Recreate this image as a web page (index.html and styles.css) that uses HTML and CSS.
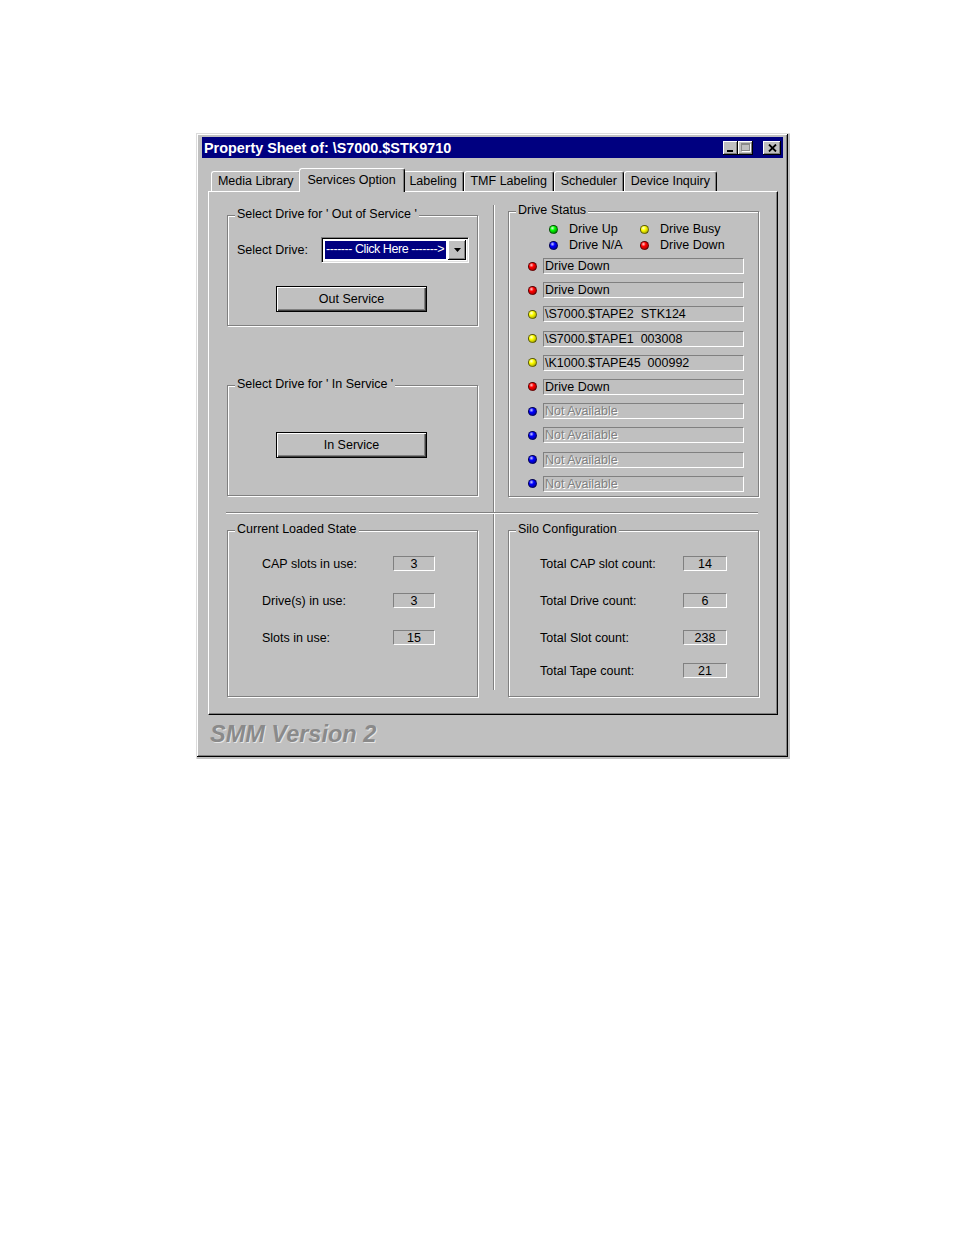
FILE: index.html
```html
<!DOCTYPE html>
<html>
<head>
<meta charset="utf-8">
<title>Property Sheet</title>
<link rel="stylesheet" href="styles.css">
</head>
<body>
<div class="window">
  <div class="frame">
    <div class="titlebar">
      <span class="title">Property Sheet of: \S7000.$STK9710</span>
      <span class="cap-btn cap-min"><span class="min-glyph"></span></span>
      <span class="cap-btn cap-max"><span class="max-glyph"></span></span>
      <span class="cap-btn cap-close">
        <svg width="9" height="8" viewBox="0 0 9 8"><path d="M1 0.5 L8 7.5 M8 0.5 L1 7.5" stroke="#000" stroke-width="1.8" fill="none"/></svg>
      </span>
    </div>

    <div class="tabs">
      <div class="tab">Media Library</div>
      <div class="tab tab-active">Services Option</div>
      <div class="tab">Labeling</div>
      <div class="tab">TMF Labeling</div>
      <div class="tab">Scheduler</div>
      <div class="tab">Device Inquiry</div>
    </div>

    <div class="panel">
      <div class="col-left">
        <div class="group group-out">
          <div class="group-title">Select Drive for ' Out of Service '</div>
          <div class="select-row">
            <span class="select-label">Select Drive:</span>
            <div class="combo">
              <span class="combo-value">------- Click Here -------&gt;</span>
              <span class="combo-btn">
                <svg width="7" height="4" viewBox="0 0 7 4"><path d="M0 0 H7 L3.5 4 Z" fill="#000"/></svg>
              </span>
            </div>
          </div>
          <div class="btn-row btn-row-out"><button class="btn">Out Service</button></div>
        </div>

        <div class="group group-in">
          <div class="group-title">Select Drive for ' In Service '</div>
          <div class="btn-row btn-row-in"><button class="btn">In Service</button></div>
        </div>
      </div>

      <div class="vdivider"></div>

      <div class="col-right">
        <div class="group group-status">
          <div class="group-title">Drive Status</div>
          <div class="legend">
            <div class="legend-item"><span class="dot dot-green"></span><span>Drive Up</span></div>
            <div class="legend-item"><span class="dot dot-yellow"></span><span>Drive Busy</span></div>
            <div class="legend-item"><span class="dot dot-blue"></span><span>Drive N/A</span></div>
            <div class="legend-item"><span class="dot dot-red"></span><span>Drive Down</span></div>
          </div>
          <div class="status-list">
            <div class="status-row"><span class="dot dot-red"></span><span class="field">Drive Down</span></div>
            <div class="status-row"><span class="dot dot-red"></span><span class="field">Drive Down</span></div>
            <div class="status-row"><span class="dot dot-yellow"></span><span class="field">\S7000.$TAPE2  STK124</span></div>
            <div class="status-row"><span class="dot dot-yellow"></span><span class="field">\S7000.$TAPE1  003008</span></div>
            <div class="status-row"><span class="dot dot-yellow"></span><span class="field">\K1000.$TAPE45  000992</span></div>
            <div class="status-row"><span class="dot dot-red"></span><span class="field">Drive Down</span></div>
            <div class="status-row"><span class="dot dot-blue"></span><span class="field field-na">Not Available</span></div>
            <div class="status-row"><span class="dot dot-blue"></span><span class="field field-na">Not Available</span></div>
            <div class="status-row"><span class="dot dot-blue"></span><span class="field field-na">Not Available</span></div>
            <div class="status-row"><span class="dot dot-blue"></span><span class="field field-na">Not Available</span></div>
          </div>
        </div>
      </div>

      <div class="hdivider"></div>

      <div class="group group-loaded">
        <div class="group-title">Current Loaded State</div>
        <div class="kv-list kv-loaded">
          <div class="kv-row"><span class="kv-label">CAP slots in use:</span><span class="val">3</span></div>
          <div class="kv-row"><span class="kv-label">Drive(s) in use:</span><span class="val">3</span></div>
          <div class="kv-row"><span class="kv-label">Slots in use:</span><span class="val">15</span></div>
        </div>
      </div>

      <div class="group group-silo">
        <div class="group-title">Silo Configuration</div>
        <div class="kv-list kv-silo">
          <div class="kv-row"><span class="kv-label">Total CAP slot count:</span><span class="val">14</span></div>
          <div class="kv-row"><span class="kv-label">Total Drive count:</span><span class="val">6</span></div>
          <div class="kv-row"><span class="kv-label">Total Slot count:</span><span class="val">238</span></div>
          <div class="kv-row kv-row-last"><span class="kv-label">Total Tape count:</span><span class="val">21</span></div>
        </div>
      </div>
    </div>

    <div class="footer">SMM Version 2</div>
  </div>
</div>
</body>
</html>
```

FILE: styles.css
```css
body {
  margin: 0;
  background: #ffffff;
  font-family: "Liberation Sans", Arial, sans-serif;
  font-size: 12.5px;
  color: #000;
}

.window {
  box-sizing: border-box;
  width: 594px;
  height: 626px;
  margin: 133px 0 0 196px;
  background: #c0c0c0;
  border-top: 1px solid #dcdcdc;
  border-left: 1px solid #dcdcdc;
  padding: 0 2px 2px 0;
}

.frame {
  box-sizing: border-box;
  height: 100%;
  border-right: 1px solid #000;
  border-bottom: 1px solid #000;
  box-shadow: inset 1px 1px #fff, inset -1px -1px #808080;
  padding: 3px 4px 0 5px;
}

/* Title bar */
.titlebar {
  height: 21px;
  background: #000080;
  color: #fff;
  display: flex;
  align-items: center;
  padding: 0 2px 0 2px;
}

.title {
  flex: 1;
  font-weight: bold;
  font-size: 14.4px;
  white-space: pre;
}

.cap-btn {
  box-sizing: border-box;
  width: 15px;
  height: 14px;
  background: #c0c0c0;
  box-shadow: inset -1px -1px #000, inset 1px 1px #fff, inset -2px -2px #808080;
  display: flex;
  align-items: center;
  justify-content: center;
}

.cap-min {
  align-items: flex-end;
  justify-content: flex-start;
}

.min-glyph {
  width: 6px;
  height: 2px;
  background: #000;
  margin: 0 0 3px 4px;
}

.max-glyph {
  box-sizing: border-box;
  width: 9px;
  height: 8px;
  border: 1px solid #8a8a8a;
  border-top-width: 2px;
  box-shadow: 1px 1px #fff;
  margin: -1px 1px 0 0;
}

.cap-close {
  width: 18px;
  margin-left: 10px;
}

/* Tabs */
.tabs {
  display: flex;
  align-items: flex-end;
  height: 24px;
  margin: 10px 0 -1px 9px;
}

.tab {
  box-sizing: border-box;
  height: 20px;
  margin-bottom: 1px;
  padding: 0 5.9px;
  line-height: 19px;
  border-top: 1px solid #fff;
  border-left: 1px solid #fff;
  border-right: 1px solid #000;
  box-shadow: inset -1px 0 #808080;
  border-radius: 3px 3px 0 0;
  white-space: nowrap;
}

.tab-active {
  position: relative;
  z-index: 1;
  height: 24px;
  margin: 0 -2px 0;
  padding: 0 7.9px;
  line-height: 22px;
  background: #c0c0c0;
}

/* Panel */
.panel {
  box-sizing: border-box;
  width: 570px;
  height: 524px;
  margin-left: 6px;
  border-top: 1px solid #fff;
  border-left: 1px solid #fff;
  border-right: 1px solid #000;
  border-bottom: 1px solid #000;
  box-shadow: inset -1px -1px #808080;
  padding-left: 18px;
  display: grid;
  grid-template-columns: 251px 30px 251px;
  grid-template-rows: auto auto auto;
  align-items: start;
  align-content: start;
}

.col-left { grid-column: 1; grid-row: 1; }
.col-right { grid-column: 3; grid-row: 1; }

.vdivider {
  grid-column: 2;
  grid-row: 1 / 4;
  justify-self: start;
  box-sizing: border-box;
  width: 2px;
  height: 485px;
  margin: 13px 0 0 15px;
  border-left: 1px solid #808080;
  border-right: 1px solid #fff;
}

.hdivider {
  grid-column: 1 / 4;
  grid-row: 2;
  box-sizing: border-box;
  height: 2px;
  margin: 15px 1px 0 -1px;
  border-top: 1px solid #808080;
  border-bottom: 1px solid #fff;
}

/* Group boxes */
.group {
  box-sizing: border-box;
  border: 1px solid #808080;
  box-shadow: inset 1px 1px #fff, 1px 1px #fff;
}

.group-title {
  width: fit-content;
  margin: -9px 0 0 7px;
  padding: 0 2px;
  line-height: 15px;
  background: #c0c0c0;
  white-space: pre;
}

.group-out { margin-top: 23px; height: 111px; }
.group-in { margin-top: 59px; height: 111px; }
.group-status { margin-top: 19px; height: 286px; }

.group-loaded {
  grid-column: 1;
  grid-row: 3;
  margin-top: 16px;
  height: 167px;
}

.group-silo {
  grid-column: 3;
  grid-row: 3;
  margin-top: 16px;
  height: 167px;
}

/* Select drive */
.select-row {
  display: flex;
  align-items: center;
  margin-top: 15px;
  padding-left: 9px;
}

.select-label {
  width: 84px;
}

.combo {
  box-sizing: border-box;
  width: 148px;
  height: 26px;
  border-style: solid;
  border-width: 1px;
  border-color: #808080 #fff #fff #808080;
  box-shadow: inset 1px 1px #000, inset -1px -1px #dfdfdf;
  background: #fff;
  padding: 2px;
  display: flex;
  gap: 1px;
}

.combo-value {
  flex: 1;
  margin: 1px;
  background: #000080;
  color: #fff;
  line-height: 16px;
  padding-left: 1px;
  letter-spacing: -0.45px;
  white-space: pre;
  overflow: hidden;
}

.combo-btn {
  box-sizing: border-box;
  width: 18px;
  background: #c0c0c0;
  box-shadow: inset -1px -1px #000, inset 1px 1px #fff, inset -2px -2px #808080;
  display: flex;
  align-items: center;
  justify-content: center;
}

.btn-row {
  display: flex;
  padding-left: 48px;
}

.btn-row-out { margin-top: 23px; }
.btn-row-in { margin-top: 40px; }

.btn {
  box-sizing: border-box;
  width: 151px;
  height: 26px;
  padding: 0;
  border: 1px solid #000;
  background: #c0c0c0;
  box-shadow: inset 1px 1px #fff, inset -1px -1px #404040, inset -2px -2px #808080;
  font: inherit;
  color: #000;
}

/* Drive status */
.legend {
  display: grid;
  grid-template-columns: 91px auto;
  margin: 3px 0 0 40px;
}

.legend-item {
  display: flex;
  align-items: center;
  gap: 11px;
  height: 16px;
}

.dot {
  flex: none;
  box-sizing: border-box;
  width: 9px;
  height: 9px;
  border-radius: 50%;
  border: 1px solid rgba(0, 0, 0, 0.55);
}

.dot-green { background: radial-gradient(circle at 35% 30%, #e0ffe0 0, #00ff00 35%, #00a000 75%, #005000 100%); }
.dot-yellow { background: radial-gradient(circle at 35% 30%, #ffffe0 0, #ffff00 35%, #b8b800 75%, #606000 100%); }
.dot-blue { background: radial-gradient(circle at 35% 30%, #d0d0ff 0, #0000ff 35%, #0000b0 75%, #000050 100%); }
.dot-red { background: radial-gradient(circle at 35% 30%, #ffd0d0 0, #ff0000 35%, #b80000 75%, #500000 100%); }

.status-list {
  display: flex;
  flex-direction: column;
  gap: 8.2px;
  margin: 5px 0 0 19px;
}

.status-row {
  display: flex;
  align-items: center;
  gap: 6px;
}

.field {
  box-sizing: border-box;
  width: 201px;
  height: 16px;
  border-top: 1px solid #808080;
  border-left: 1px solid #808080;
  border-bottom: 1px solid #fff;
  border-right: 1px solid #fff;
  padding-left: 1px;
  line-height: 15px;
  white-space: pre;
  overflow: hidden;
}

.field-na {
  color: #808080;
  text-shadow: 1px 1px #fff;
}

/* Key / value lists */
.kv-list {
  display: flex;
  flex-direction: column;
  gap: 22px;
  margin-top: 19px;
}

.kv-loaded { padding-left: 34px; }
.kv-silo { padding-left: 31px; }

.kv-row {
  display: flex;
  align-items: center;
  height: 15px;
}

.kv-row-last { margin-top: -4px; }

.kv-loaded .kv-label { width: 131px; }
.kv-silo .kv-label { width: 143px; }

.val {
  box-sizing: border-box;
  width: 42px;
  height: 15px;
  border-top: 1px solid #808080;
  border-left: 1px solid #808080;
  border-bottom: 1px solid #fff;
  border-right: 1px solid #fff;
  text-align: center;
  line-height: 14px;
}

.kv-silo .val { width: 44px; }

/* Footer */
.footer {
  margin-top: 5px;
  padding-left: 8px;
  font-size: 23.5px;
  font-weight: bold;
  font-style: italic;
  line-height: 28px;
  color: #8a8a8a;
  text-shadow: 1px 1px #e6e6e6;
}
```
